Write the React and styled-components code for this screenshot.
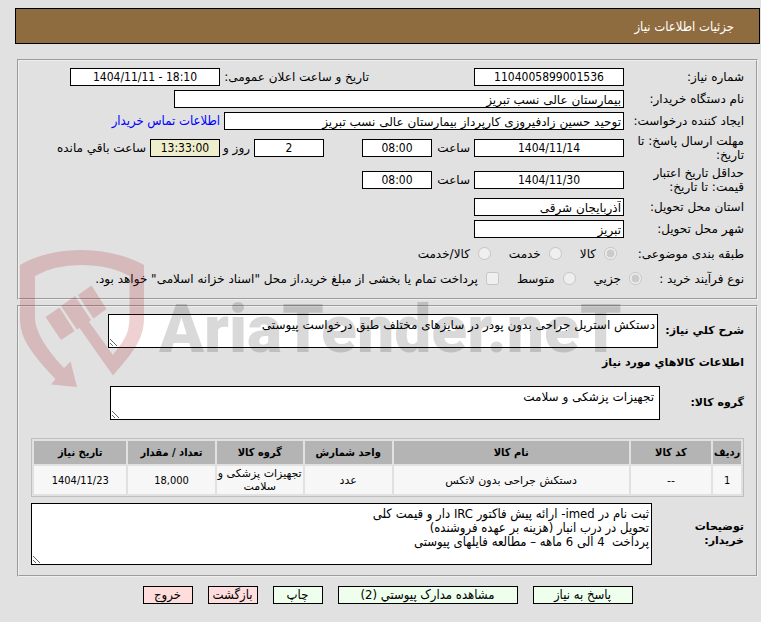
import React from "react";
import styled, { createGlobalStyle } from "styled-components";

const condensed = `"DejaVu Sans Condensed", "DejaVu Sans", sans-serif`;

const GlobalStyle = createGlobalStyle`
  *, *::before, *::after { box-sizing: border-box; }
  body {
    margin: 0;
    background: #e1e1e1;
    color: #000;
    font: 12px/14px "DejaVu Sans", sans-serif;
  }
  input, textarea, button { font: inherit; color: inherit; }
`;

const Page = styled.div`
  position: relative;
  padding: 8px 1px 16px 15px;
`;

const TitleBar = styled.header`
  display: flex;
  align-items: center;
  height: 36px;
  padding: 2px 25px 0;
  border: 1px solid #000;
  background: #8f6c40;
`;

const Title = styled.h1`
  margin: 0;
  color: #fff;
  font: 13px/14px ${condensed};
`;

const Panel = styled.fieldset`
  min-width: 0;
  margin: ${(p) => p.$gap}px 2px 0;
  padding: 7px 12px 10px;
  border: 2px groove threedface;
`;

const Rows = styled.div`
  display: flex;
  flex-direction: column;
  gap: 4px;
`;

const Row = styled.div`
  display: flex;
  align-items: center;
  gap: 4px;
  min-height: ${(p) => p.$height || 18}px;
`;

const Label = styled.label`
  flex: none;
  width: 116px;
`;

const RowEnd = styled.div`
  display: flex;
  align-items: center;
  gap: 4px;
  margin-inline-start: ${(p) => p.$indent}px;
`;

const PublishLabel = styled.label`
  width: 145px;
  white-space: nowrap;
`;

const Unit = styled.span`
  width: ${(p) => p.$width}px;
  white-space: nowrap;
`;

const Field = styled.input`
  flex: 0 1 ${(p) => p.$width}px;
  width: ${(p) => p.$width}px;
  min-width: 0;
  height: 18px;
  padding: ${(p) => (p.$numeric ? "0 2px" : "2px 2px 0")};
  border: 1px solid #000;
  border-radius: 0;
  background: ${(p) => (p.$highlight ? "#eeeecc" : "#fff")};
  font-family: ${(p) => (p.$numeric ? condensed : "inherit")};
  text-align: ${(p) => (p.$numeric ? "center" : "start")};
`;

const ContactLink = styled.a`
  color: #00f;
  font: 13px/14px ${condensed};
  text-decoration: none;
  white-space: nowrap;
`;

const GroupLabel = styled.span`
  flex: none;
  width: ${(p) => p.$width}px;
`;

const Choice = styled.label`
  display: flex;
  align-items: center;
  gap: 8px;
  margin-inline-end: 14px;
  white-space: nowrap;
`;

const Tick = styled.input`
  flex: none;
  width: 13px;
  height: 13px;
  margin: 0 0 2px;
`;

const BlockRow = styled.div`
  display: flex;
  align-items: center;
  margin-top: ${(p) => p.$top || 0}px;
`;

const StrongLabel = styled.label`
  flex: none;
  width: ${(p) => p.$width}px;
  font-size: 11px;
  font-weight: bold;
  white-space: nowrap;
`;

const SectionTitle = styled.h2`
  margin: 8px 0 0;
  font-size: 11px;
  line-height: 14px;
`;

const Area = styled.textarea`
  display: block;
  flex: 0 1 550px;
  min-width: 0;
  height: 34px;
  margin: 0;
  padding: 3px ${(p) => p.$inset || 2}px;
  border: 1px solid #000;
  border-radius: 0;
  background: #fff;
  line-height: 14px;
`;

const NotesArea = styled(Area)`
  flex: 1;
  height: 62px;
  font: 13px/14px ${condensed};
`;

const Items = styled.table`
  width: 100%;
  margin: 18px 0 6px;
  table-layout: fixed;
  border: 1px solid #bfbfbf;
  border-spacing: 2px;
  text-align: center;
`;

const Col = styled.col`
  width: ${(p) => p.$share}%;
`;

const HeadCell = styled.th`
  height: 23px;
  padding: 0;
  background: #b4b4b4;
  font-family: ${condensed};
  font-size: 11px;
  white-space: nowrap;
`;

const Cell = styled.td`
  height: 28px;
  padding: 1px 0;
  background: #f7f7f7;
  font-family: ${(p) => (p.$tight ? condensed : "inherit")};
  font-size: 11px;
  line-height: 13px;
`;

const Actions = styled.div`
  display: flex;
  justify-content: center;
  gap: 15px;
  margin-top: 9px;
`;

const Action = styled.button`
  width: ${(p) => p.$width}px;
  height: 18px;
  padding: 0;
  border: 1px solid #000;
  border-radius: 0;
  background: ${(p) => (p.$leave ? "#ffdddd" : "#eeffee")};
  font: 13px/14px ${condensed};
  white-space: nowrap;
`;

const Watermark = styled.svg`
  position: absolute;
  top: 248px;
  left: 18px;
  pointer-events: none;
`;

const columns = [
  { name: "ردیف", share: 4, tight: true },
  { name: "کد کالا", share: 11.6 },
  { name: "نام کالا", share: 33.8 },
  { name: "واحد شمارش", share: 12.5 },
  { name: "گروه کالا", share: 12.4 },
  { name: "تعداد / مقدار", share: 12.4, tight: true },
  { name: "تاریخ نیاز", share: 13.3, tight: true },
];

const items = [
  ["1", "--", "دستکش جراحی بدون لاتکس", "عدد", "تجهیزات پزشکی و سلامت", "18,000", "1404/11/23"],
];

const actions = [
  { text: "پاسخ به نیاز", width: 100 },
  { text: "مشاهده مدارک پیوستي (2)", width: 180 },
  { text: "چاپ", width: 50 },
  { text: "بازگشت", width: 50, leave: true },
  { text: "خروج", width: 50, leave: true },
];

const notes = `ثبت نام در imed- ارائه پیش فاکتور IRC دار و قیمت کلی
تحویل در درب انبار (هزینه بر عهده فروشنده)
پرداخت  4 الی 6 ماهه – مطالعه فایلهای پیوستی`;

function BrandWatermark() {
  return (
    <Watermark width="620" height="144" viewBox="0 0 620 144" direction="ltr" aria-hidden="true">
      <g fill="#aa191e" fillOpacity="0.2">
        <path d="M2 17 Q28 2 63 2 Q98 2 126 17 V70 C126 94 112 107 95 127.500 L61.500 80 L59 81.500 L43 58 L57 48 L73 72 L71 74 L95 107 C106 92 111.500 87 111.500 68 V28 Q92 17 63 17 Q36 17 17 28 V70 C17 84 30 103 46 120 L52.500 113.500 L59 139 L33 136.500 L37.500 131 C14 106 2 91 2 70 Z" />
        <path d="M27.500 69 L41.500 59.500 L56.500 83 L43 92 Z" />
        <path d="M60 47 L73.500 37.500 L88.500 61 L75.500 70.500 Z" />
      </g>
      <text
        x="141"
        y="104"
        fill="#000"
        fillOpacity="0.15"
        fontFamily='Roboto, "Liberation Sans", sans-serif'
        fontSize="66"
        fontWeight="900"
      >
        AriaTender.neT
      </text>
    </Watermark>
  );
}

export default function App() {
  return (
    <Page dir="rtl" lang="fa">
      <GlobalStyle />
      <TitleBar>
        <Title>جزئیات اطلاعات نیاز</Title>
      </TitleBar>

      <Panel $gap={15}>
        <Rows>
          <Row>
            <Label htmlFor="number">شماره نیاز:</Label>
            <Field id="number" $width={150} $numeric readOnly value="1104005899001536" />
            <RowEnd $indent={101}>
              <PublishLabel htmlFor="published">تاریخ و ساعت اعلان عمومی:</PublishLabel>
              <Field id="published" dir="ltr" $width={150} $numeric readOnly value="1404/11/11 - 18:10" />
            </RowEnd>
          </Row>
          <Row>
            <Label htmlFor="buyer">نام دستگاه خریدار:</Label>
            <Field id="buyer" $width={450} readOnly value="بیمارستان عالی نسب تبریز" />
          </Row>
          <Row>
            <Label htmlFor="creator">ایجاد کننده درخواست:</Label>
            <Field
              id="creator"
              $width={400}
              readOnly
              value="توحید حسین زادفیروزی کارپرداز بیمارستان عالی نسب تبریز"
            />
            <ContactLink href="#contact">اطلاعات تماس خریدار</ContactLink>
          </Row>
          <Row $height={28}>
            <Label htmlFor="deadline">مهلت ارسال پاسخ: تا تاریخ:</Label>
            <Field id="deadline" $width={150} $numeric readOnly value="1404/11/14" />
            <Unit $width={34}>ساعت</Unit>
            <Field aria-label="ساعت مهلت" $width={70} $numeric readOnly value="08:00" />
            <RowEnd $indent={34}>
              <Field aria-label="روز" $width={70} $numeric readOnly value="2" />
              <Unit $width={26}>روز و</Unit>
              <Field aria-label="زمان مانده" $width={70} $numeric $highlight readOnly value="13:33:00" />
              <Unit $width={94}>ساعت باقي مانده</Unit>
            </RowEnd>
          </Row>
          <Row $height={28}>
            <Label htmlFor="validity">حداقل تاریخ اعتبار قیمت: تا تاریخ:</Label>
            <Field id="validity" $width={150} $numeric readOnly value="1404/11/30" />
            <Unit $width={34}>ساعت</Unit>
            <Field aria-label="ساعت اعتبار" $width={70} $numeric readOnly value="08:00" />
          </Row>
          <Row>
            <Label htmlFor="province">استان محل تحویل:</Label>
            <Field id="province" $width={150} readOnly value="آذربایجان شرقی" />
          </Row>
          <Row>
            <Label htmlFor="city">شهر محل تحویل:</Label>
            <Field id="city" $width={150} readOnly value="تبریز" />
          </Row>
          <Row $height={24} role="radiogroup" aria-labelledby="subject">
            <GroupLabel id="subject" $width={123}>طبقه بندی موضوعی:</GroupLabel>
            <Choice><Tick type="radio" name="subject" disabled defaultChecked />کالا</Choice>
            <Choice><Tick type="radio" name="subject" disabled />خدمت</Choice>
            <Choice><Tick type="radio" name="subject" disabled />کالا/خدمت</Choice>
          </Row>
          <Row role="radiogroup" aria-labelledby="process">
            <GroupLabel id="process" $width={98}>نوع فرآیند خرید :</GroupLabel>
            <Choice><Tick type="radio" name="process" disabled defaultChecked />جزیي</Choice>
            <Choice><Tick type="radio" name="process" disabled />متوسط</Choice>
            <Choice>
              <Tick type="checkbox" disabled />
              پرداخت تمام یا بخشی از مبلغ خرید،از محل "اسناد خزانه اسلامی" خواهد بود.
            </Choice>
          </Row>
        </Rows>
      </Panel>

      <Panel $gap={5}>
        <BlockRow>
          <StrongLabel htmlFor="summary" $width={86}>شرح کلي نیاز:</StrongLabel>
          <Area id="summary" readOnly value="دستکش استریل جراحی بدون پودر در سایزهای مختلف طبق درخواست پیوستی" />
        </BlockRow>
        <SectionTitle>اطلاعات کالاهاي مورد نیاز</SectionTitle>
        <BlockRow $top={16}>
          <StrongLabel htmlFor="group" $width={84}>گروه کالا:</StrongLabel>
          <Area id="group" $inset={5} readOnly value="تجهیزات پزشکی و سلامت" />
        </BlockRow>
        <Items>
          <colgroup>
            {columns.map((c) => <Col key={c.name} $share={c.share} />)}
          </colgroup>
          <thead>
            <tr>{columns.map((c) => <HeadCell key={c.name} scope="col">{c.name}</HeadCell>)}</tr>
          </thead>
          <tbody>
            {items.map((item) => (
              <tr key={item[0]}>
                {item.map((value, i) => <Cell key={columns[i].name} $tight={columns[i].tight}>{value}</Cell>)}
              </tr>
            ))}
          </tbody>
        </Items>
        <BlockRow>
          <StrongLabel htmlFor="notes" $width={92}>توضیحات<br />خریدار:</StrongLabel>
          <NotesArea id="notes" readOnly value={notes} />
        </BlockRow>
      </Panel>

      <Actions>
        {actions.map((a) => (
          <Action key={a.text} type="button" $width={a.width} $leave={a.leave}>{a.text}</Action>
        ))}
      </Actions>
      <BrandWatermark />
    </Page>
  );
}
